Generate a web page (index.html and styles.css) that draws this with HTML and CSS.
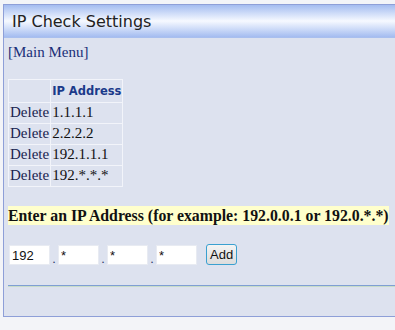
FILE: index.html
```html
<!DOCTYPE html>
<html lang="en">
<head>
    <meta charset="UTF-8">
    <title>IP Check Settings</title>
    <link rel="stylesheet" href="styles.css">
</head>
<body>
    <div class="panel">
        <div class="title-bar">IP Check Settings</div>
        <div class="content">
            <a class="menu-link" href="#">[Main Menu]</a>
            <table class="ip-table">
                <tr>
                    <th></th>
                    <th>IP Address</th>
                </tr>
                <tr><td>Delete</td><td>1.1.1.1</td></tr>
                <tr><td>Delete</td><td>2.2.2.2</td></tr>
                <tr><td>Delete</td><td>192.1.1.1</td></tr>
                <tr><td>Delete</td><td>192.*.*.*</td></tr>
            </table>
            <p class="hint">Enter an IP Address (for example: 192.0.0.1 or 192.0.*.*)</p>
            <form class="ip-form">
                <input type="text" value="192">
                <span class="dot">.</span>
                <input type="text" value="*">
                <span class="dot">.</span>
                <input type="text" value="*">
                <span class="dot">.</span>
                <input type="text" value="*">
                <button type="button">Add</button>
            </form>
            <hr>
        </div>
    </div>
</body>
</html>
```

FILE: styles.css
```css
body {
    margin: 0;
    padding: 4px 0 0 3px;
    background: #f3f4f8;
    font-family: 'Liberation Serif', serif;
    color: #1a2a5e;
    height: 326px;
    overflow: hidden;
}
.panel {
    border: 1px solid #8e9fd8;
    border-right: none;
    background: #dde2ef;
    height: 311px;
}
.title-bar {
    height: 32px;
    line-height: 33px;
    padding-left: 8px;
    font-family: 'DejaVu Sans', sans-serif;
    font-size: 16px;
    color: #222;
    background: linear-gradient(#a4bcf0, #cddbf8 25%, #f6f9ff 50%, #cddbf8 75%, #a4bcf0);
    border-bottom: 1px solid #a9bfee;
}
.content {
    padding: 6px 0 0 4px;
}
.menu-link {
    display: block;
    color: #1a2f78;
    text-decoration: none;
    font-size: 15px;
    height: 35px;
}
.ip-table {
    border-collapse: collapse;
    border: 1px solid #f2f4fa;
    font-size: 15px;
}
.ip-table th,
.ip-table td {
    border: 1px solid #f2f4fa;
    padding: 1px 1px 2px 1px;
    text-align: left;
    white-space: nowrap;
}
.ip-table th {
    font-family: 'DejaVu Sans', sans-serif;
    font-size: 11.5px;
    color: #1a3a8a;
    height: 18px;
    padding-top: 2px;
}
.ip-table td {
    color: #1a2450;
    height: 17px;
}
.ip-table td + td {
    color: #111;
    padding-right: 2px;
}
.hint {
    display: inline-block;
    margin: 19px 0 0 0;
    background: #ffffcc;
    font-weight: bold;
    font-size: 15.8px;
    color: #111;
    padding: 0;
    line-height: 19px;
}
.ip-form {
    display: flex;
    align-items: flex-end;
    margin: 19px 0 0 1px;
}
.ip-form input {
    width: 36px;
    height: 18px;
    border: 1px solid #e8ebf2;
    padding: 0 1px 0 2px;
    font-family: 'Liberation Sans', sans-serif;
    font-size: 13px;
    color: #111;
    background: #fff;
}
.dot {
    width: 8px;
    text-align: center;
    font-size: 12px;
    line-height: 12px;
}
.ip-form button {
    margin-left: 9px;
    height: 21px;
    padding: 0 3px;
    font-family: 'Liberation Sans', sans-serif;
    font-size: 13px;
    color: #111;
    background: linear-gradient(#f4f4f4, #dcdcdc);
    border: 1px solid #3aa0d0;
    border-radius: 3px;
}
hr {
    margin: 20px 0 0 0;
    border: none;
    border-top: 1px solid #7f9fd4;
    border-bottom: 1px solid #c8dcc8;
}
```
